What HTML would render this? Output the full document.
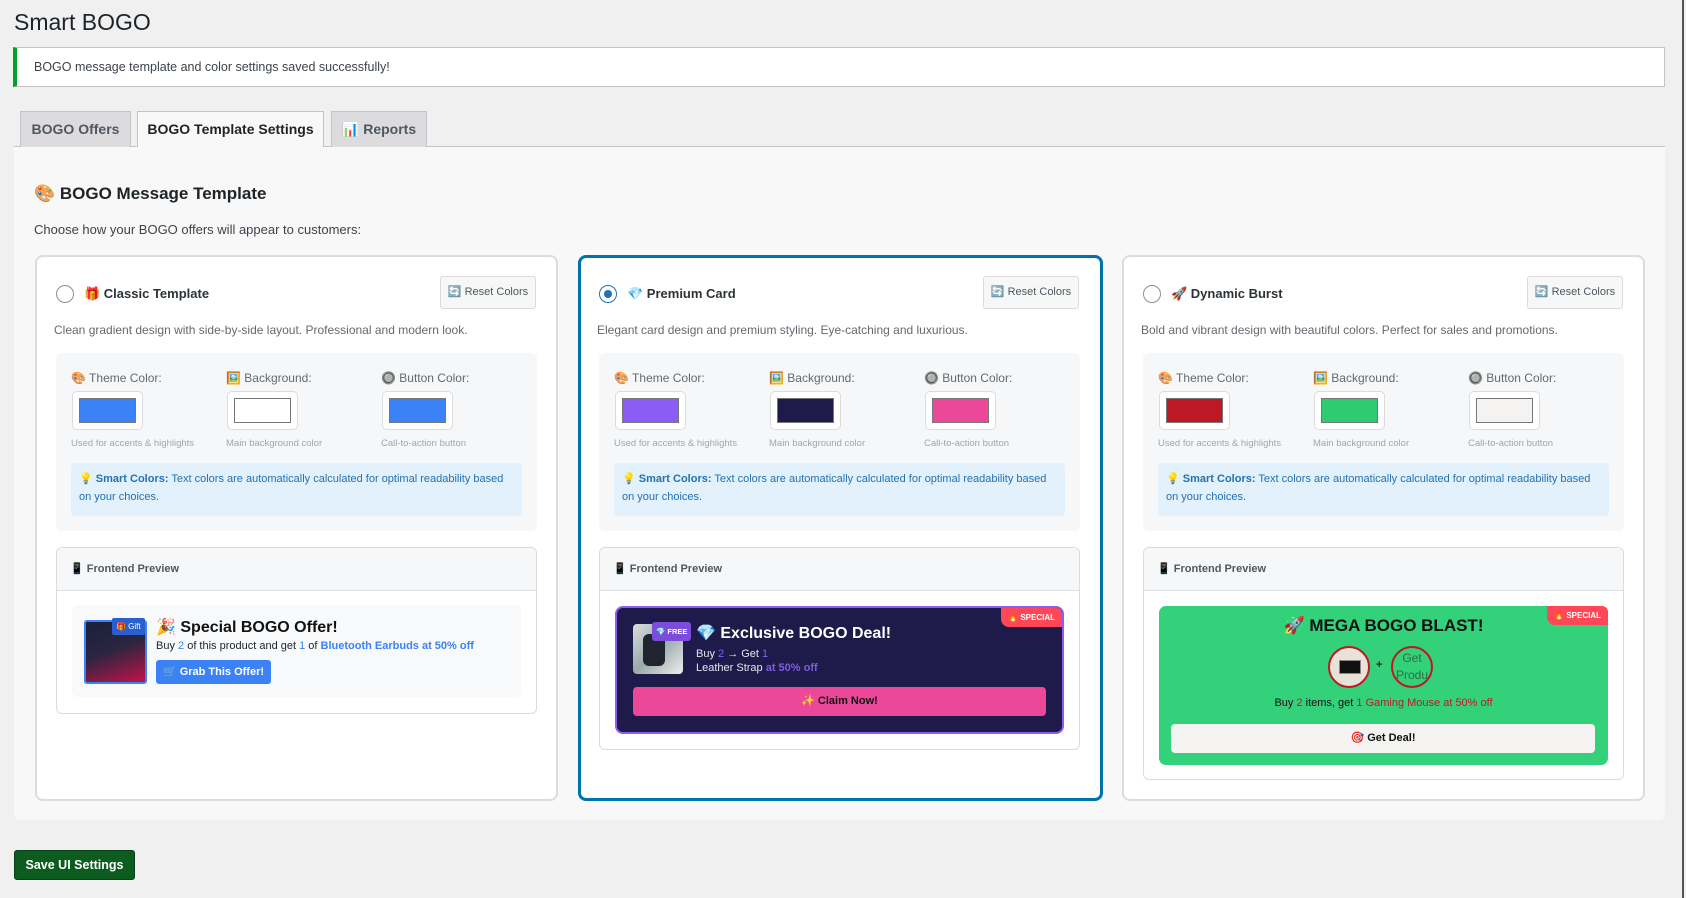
<!DOCTYPE html>
<html><head><meta charset="utf-8"><style>
*{box-sizing:border-box;margin:0;padding:0}
body{width:1686px;height:898px;background:#f0f0f1;font-family:"Liberation Sans","Noto Sans CJK JP",sans-serif;color:#1d2327;position:relative;overflow:hidden}
.a{position:absolute}
.tab{position:absolute;top:111px;height:36px;border:1px solid #c3c4c7;border-bottom:none;background:#dcdcde;font-weight:bold;font-size:14px;color:#50575e;line-height:34px;text-align:center}
.card{position:absolute;top:255px;width:523px;height:546px;background:#fff;border:2px solid #dcdcde;border-radius:8px}
.card.sel{border:3px solid #0073aa}
.radio{position:absolute;left:19px;top:28px;width:18px;height:18px;border:1px solid #8c8f94;border-radius:50%;background:#fff}
.ttl{position:absolute;left:47px;top:29px;font-size:13px;font-weight:bold;color:#2c3338}
.reset{position:absolute;left:403px;top:19px;width:96px;height:33px;border:1px solid #dcdcde;background:#f6f7f7;border-radius:3px;font-size:11px;color:#50575e;line-height:31px;text-align:center}
.desc{position:absolute;left:17px;top:66px;font-size:12px;color:#646970}
.set{position:absolute;left:19px;top:96px;width:481px;height:178px;background:#f6f7f9;border-radius:6px}
.lbl{position:absolute;top:18px;font-size:12px;color:#646970}
.sw{position:absolute;top:38px;width:71px;height:39px;background:#fff;border:1px solid #dcdcde;border-radius:5px;padding:6px}
.sw div{width:100%;height:100%;border:1px solid #777}
.hint{position:absolute;top:85px;font-size:9.5px;color:#a0a5aa}
.smart{position:absolute;left:15px;top:110px;width:451px;height:53px;background:#e3f1fc;border-radius:4px;padding:7px 8px;font-size:11px;line-height:18px;color:#2271b1}
.prev{position:absolute;left:19px;top:290px;width:481px;background:#fff;border:1px solid #dcdcde;border-radius:6px;overflow:hidden}
.ph{height:43px;background:#f6f7f9;border-bottom:1px solid #dcdcde;font-size:11px;font-weight:bold;color:#50575e;padding:14px 13px}
.badge{position:absolute;right:0;top:0;background:#ff4757;color:#fff;font-size:8px;font-weight:bold;padding:5px 7px;border-radius:0 6px 0 8px}
</style></head><body>
<div class="a" style="left:14px;top:9px;font-size:23px;color:#1d2327">Smart BOGO</div>
<div class="a" style="left:13px;top:47px;width:1652px;height:40px;background:#fff;border:1px solid #c3c4c7;border-left:4px solid #00a32a;font-size:12.5px;padding:12px 0 0 17px;color:#3c434a">BOGO message template and color settings saved successfully!</div>
<div class="a" style="left:14px;top:146px;width:1651px;height:1px;background:#c3c4c7"></div>
<div class="tab" style="left:20px;width:111px">BOGO Offers</div>
<div class="tab" style="left:137px;width:187px;background:#f8f8f8;color:#1d2327;height:37px">BOGO Template Settings</div>
<div class="tab" style="left:331px;width:96px">📊 Reports</div>
<div class="a" style="left:14px;top:147px;width:1651px;height:673px;background:#f8f8f8;border-radius:0 0 6px 6px"></div>
<div class="a" style="left:34px;top:184px;font-size:17px;font-weight:bold;color:#1d2327">🎨 BOGO Message Template</div>
<div class="a" style="left:34px;top:222px;font-size:13px;color:#3c434a">Choose how your BOGO offers will appear to customers:</div>

<!-- Card 1 -->
<div class="card" style="left:35px">
<div class="radio"></div><div class="ttl">🎁 Classic Template</div>
<div class="reset">🔄 Reset Colors</div>
<div class="desc">Clean gradient design with side-by-side layout. Professional and modern look.</div>
<div class="set">
<div class="lbl" style="left:15px">🎨 Theme Color:</div><div class="lbl" style="left:170px">🖼️ Background:</div><div class="lbl" style="left:325px">🔘 Button Color:</div>
<div class="sw" style="left:16px"><div style="background:#3b82f6"></div></div>
<div class="sw" style="left:171px"><div style="background:#fff"></div></div>
<div class="sw" style="left:326px"><div style="background:#3b82f6"></div></div>
<div class="hint" style="left:15px">Used for accents &amp; highlights</div><div class="hint" style="left:170px">Main background color</div><div class="hint" style="left:325px">Call-to-action button</div>
<div class="smart">💡 <b>Smart Colors:</b> Text colors are automatically calculated for optimal readability based on your choices.</div>
</div>
<div class="prev" style="height:167px"><div class="ph">📱 Frontend Preview</div>
<div class="a" style="left:15px;top:57px;width:449px;height:92px;background:#f7f9fb;border-radius:6px">
<div class="a" style="left:12px;top:15px;width:63px;height:64px;border:2px solid #3b82f6;border-radius:3px;background:linear-gradient(160deg,#1a1f3a 0%,#2a2540 45%,#c0134a 100%)"></div>
<div class="a" style="left:40px;top:13px;background:#2a5fcf;color:#fff;font-size:8px;padding:4px 4px;border-radius:2px">🎁 Gift</div>
<div class="a" style="left:84px;top:12px;font-size:16px;font-weight:bold;color:#111">🎉 Special BOGO Offer!</div>
<div class="a" style="left:84px;top:35px;font-size:11px;color:#1d2327">Buy <span style="color:#3b82f6">2</span> of this product and get <span style="color:#3b82f6">1</span> of <b style="color:#3b82f6">Bluetooth Earbuds at 50% off</b></div>
<div class="a" style="left:84px;top:55px;width:115px;height:24px;background:#3b82f6;border-radius:3px;color:#fff;font-size:11px;font-weight:bold;line-height:24px;text-align:center">🛒 Grab This Offer!</div>
</div></div>
</div>

<!-- Card 2 -->
<div class="card sel" style="left:578px;width:525px">
<div class="radio" style="left:18px;top:27px;border-color:#2271b1"><div class="a" style="left:4px;top:4px;width:8px;height:8px;border-radius:50%;background:#2271b1"></div></div>
<div class="ttl" style="left:46px;top:28px">💎 Premium Card</div>
<div class="reset" style="left:402px;top:18px">🔄 Reset Colors</div>
<div class="desc" style="left:16px;top:65px">Elegant card design and premium styling. Eye-catching and luxurious.</div>
<div class="set" style="left:18px;top:95px">
<div class="lbl" style="left:15px">🎨 Theme Color:</div><div class="lbl" style="left:170px">🖼️ Background:</div><div class="lbl" style="left:325px">🔘 Button Color:</div>
<div class="sw" style="left:16px"><div style="background:#8b5cf6"></div></div>
<div class="sw" style="left:171px"><div style="background:#1e1b4b"></div></div>
<div class="sw" style="left:326px"><div style="background:#ec4899"></div></div>
<div class="hint" style="left:15px">Used for accents &amp; highlights</div><div class="hint" style="left:170px">Main background color</div><div class="hint" style="left:325px">Call-to-action button</div>
<div class="smart">💡 <b>Smart Colors:</b> Text colors are automatically calculated for optimal readability based on your choices.</div>
</div>
<div class="prev" style="left:18px;top:289px;height:203px"><div class="ph">📱 Frontend Preview</div>
<div class="a" style="left:15px;top:58px;width:449px;height:128px;background:#1e1b4b;border:2px solid #8b5cf6;border-radius:8px">
<div class="badge">🔥 SPECIAL</div>
<div class="a" style="left:16px;top:16px;width:50px;height:50px;border-radius:4px;background:linear-gradient(135deg,#ddd 0%,#9aa 50%,#eee 100%)"><div class="a" style="left:10px;top:10px;width:22px;height:32px;background:#1f2430;border-radius:6px"></div></div>
<div class="a" style="left:35px;top:14px;background:#7c4ddb;color:#fff;font-size:7.5px;font-weight:bold;padding:5px 4px;border-radius:3px">💎 FREE</div>
<div class="a" style="left:79px;top:15px;font-size:16px;font-weight:bold;color:#fff">💎 Exclusive BOGO Deal!</div>
<div class="a" style="left:79px;top:39px;font-size:11px;color:#e5e5f0;line-height:14px">Buy <span style="color:#8b5cf6">2</span> → Get <span style="color:#8b5cf6">1</span><br>Leather Strap <b style="color:#7c5ce0">at 50% off</b></div>
<div class="a" style="left:16px;top:79px;width:413px;height:29px;background:#ec4899;border-radius:4px;font-size:11px;font-weight:bold;color:#111;line-height:29px;text-align:center">✨ Claim Now!</div>
</div></div>
</div>

<!-- Card 3 -->
<div class="card" style="left:1122px">
<div class="radio"></div><div class="ttl">🚀 Dynamic Burst</div>
<div class="reset">🔄 Reset Colors</div>
<div class="desc">Bold and vibrant design with beautiful colors. Perfect for sales and promotions.</div>
<div class="set">
<div class="lbl" style="left:15px">🎨 Theme Color:</div><div class="lbl" style="left:170px">🖼️ Background:</div><div class="lbl" style="left:325px">🔘 Button Color:</div>
<div class="sw" style="left:16px"><div style="background:#be1826"></div></div>
<div class="sw" style="left:171px"><div style="background:#2ecc71"></div></div>
<div class="sw" style="left:326px"><div style="background:#f4f3f1"></div></div>
<div class="hint" style="left:15px">Used for accents &amp; highlights</div><div class="hint" style="left:170px">Main background color</div><div class="hint" style="left:325px">Call-to-action button</div>
<div class="smart">💡 <b>Smart Colors:</b> Text colors are automatically calculated for optimal readability based on your choices.</div>
</div>
<div class="prev" style="height:233px"><div class="ph">📱 Frontend Preview</div>
<div class="a" style="left:15px;top:58px;width:449px;height:159px;background:#33d17a;border-radius:7px">
<div class="badge">🔥 SPECIAL</div>
<div class="a" style="left:0;top:10px;width:449px;text-align:center;font-size:17px;font-weight:bold;color:#111">🚀 MEGA BOGO BLAST!</div>
<div class="a" style="left:169px;top:40px;width:42px;height:42px;border:2px solid #be1826;border-radius:50%;background:#e9e2d8;overflow:hidden"><div class="a" style="left:9px;top:12px;width:22px;height:14px;background:#111;border:1px solid #888"></div></div>
<div class="a" style="left:217px;top:53px;font-size:11px;font-weight:bold">+</div>
<div class="a" style="left:232px;top:40px;width:42px;height:42px;border:2px solid #be1826;border-radius:50%;overflow:hidden;font-size:12px;color:#2e6b4a;text-align:center;line-height:17px;padding-top:2px;white-space:nowrap">Get<br>Produ</div>
<div class="a" style="left:0;top:91px;width:449px;text-align:center;font-size:11px;color:#111">Buy <span style="color:#be1826">2</span> items, get <span style="color:#be1826">1 Gaming Mouse at 50% off</span></div>
<div class="a" style="left:12px;top:118px;width:424px;height:29px;background:#f4f3f1;border-radius:4px;font-size:11px;font-weight:bold;color:#111;line-height:29px;text-align:center">🎯 Get Deal!</div>
</div></div>
</div>

<div class="a" style="left:14px;top:850px;width:121px;height:30px;background:#0b5c1e;border:1px solid #06401a;border-radius:3px;color:#fff;font-size:12.5px;font-weight:bold;line-height:28px;text-align:center">Save UI Settings</div>
<div class="a" style="left:1682px;top:0;width:2px;height:898px;background:#555"></div>
</body></html>
